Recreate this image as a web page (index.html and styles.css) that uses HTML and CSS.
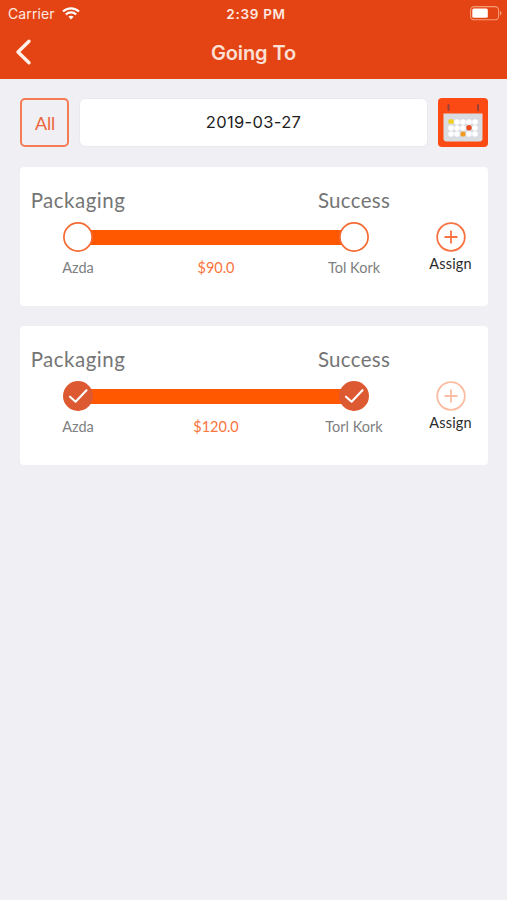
FILE: index.html
```html
<!DOCTYPE html>
<html lang="en">
<head>
<meta charset="utf-8">
<title>Going To</title>
<link rel="stylesheet" href="styles.css">
</head>
<body>
<header class="header">
  <div class="status">
    <div class="carrier"><span class="carrier-name">Carrier</span>
      <svg class="wifi" width="18" height="13" viewBox="0 0 18 13" fill="none" stroke="#fff" stroke-width="2.1"><path d="M1 4.6C5.4.3 12.6.3 17 4.6"/><path d="M3.8 7.5c2.9-2.8 7.5-2.8 10.4 0"/><path d="M6.4 9.7c1.5-1.3 3.7-1.3 5.2 0L9 12.4z" fill="#fff" stroke="none"/></svg>
    </div>
    <span class="time">2:39 PM</span>
    <svg class="battery" width="32" height="15" viewBox="0 0 32 15"><rect x=".6" y=".6" width="28" height="13.2" rx="3.6" fill="none" stroke="#f59b78" stroke-width="1.1"/><rect x="2.3" y="2.6" width="15.5" height="9.2" rx="1.5" fill="#fff"/><path d="M30 5c2 .7 2 3.7 0 4.4z" fill="#f59b78"/></svg>
  </div>
  <nav class="nav">
    <svg class="back" width="18" height="28" viewBox="0 0 18 28" fill="none" stroke="#fff0e9" stroke-width="3.4" stroke-linecap="round" stroke-linejoin="round"><path d="M14 3.2 3 14l11 10.8"/></svg>
    <h1 class="title">Going To</h1>
  </nav>
</header>
<main class="content">
  <div class="filters">
    <button class="all">All</button>
    <div class="date">2019-03-27</div>
    <svg class="calendar" width="50" height="49" viewBox="0 0 50 49"><rect width="50" height="49" rx="4" fill="#fc4a14"/><path d="M5.5 15.5h39v25q0 3-3 3h-33q-3 0-3-3z" fill="#d9dce1"/><g stroke="#994039" stroke-width="2" stroke-linecap="round"><path d="M10.5 7v5M40 7v5"/></g><g fill="#fff"><circle cx="19" cy="24" r="2.8"/><circle cx="25" cy="24" r="2.8"/><circle cx="31" cy="24" r="2.8"/><circle cx="37" cy="24" r="2.8"/><circle cx="13" cy="30" r="2.8"/><circle cx="19" cy="30" r="2.8"/><circle cx="25" cy="30" r="2.8"/><circle cx="37" cy="30" r="2.8"/><circle cx="13" cy="36" r="2.8"/><circle cx="19" cy="36" r="2.8"/><circle cx="31" cy="36" r="2.8"/><circle cx="37" cy="36" r="2.8"/></g><rect x="10.3" y="21.2" width="5.5" height="4.6" rx="1.5" fill="#f2cf24"/><circle cx="31" cy="29.7" r="2.7" fill="#ed4b21"/><circle cx="25" cy="36" r="2.6" fill="#f29a22"/></svg>
  </div>

  <section class="card">
    <div class="route">
      <div class="stages"><span class="packaging">Packaging</span><span class="success">Success</span></div>
      <div class="track">
        <svg class="dot" viewBox="0 0 30 30"><circle cx="15" cy="15" r="14.1" fill="#fff" stroke="#f56a32" stroke-width="1.7"/></svg>
        <div class="bar"></div>
        <svg class="dot" viewBox="0 0 30 30"><circle cx="15" cy="15" r="14.1" fill="#fff" stroke="#f56a32" stroke-width="1.7"/></svg>
      </div>
      <div class="places"><span class="from">Azda</span><span class="price">$90.0</span><span class="to">Tol Kork</span></div>
    </div>
    <div class="assign">
      <svg class="plus" viewBox="0 0 30 30" fill="none" stroke="#f77442" stroke-width="1.8"><circle cx="15" cy="15" r="13.8"/><path d="M8.5 15h13M15 8.5v13"/></svg>
      <span class="assign-label">Assign</span>
    </div>
  </section>

  <section class="card">
    <div class="route">
      <div class="stages"><span class="packaging">Packaging</span><span class="success">Success</span></div>
      <div class="track">
        <svg class="dot" viewBox="0 0 30 30"><circle cx="15" cy="15" r="15" fill="#dc5932"/><path d="m7 15.7 5.6 5L23.5 9.2" fill="none" stroke="#fff" stroke-width="2.1" stroke-linecap="round" stroke-linejoin="round"/></svg>
        <div class="bar"></div>
        <svg class="dot" viewBox="0 0 30 30"><circle cx="15" cy="15" r="15" fill="#dc5932"/><path d="m7 15.7 5.6 5L23.5 9.2" fill="none" stroke="#fff" stroke-width="2.1" stroke-linecap="round" stroke-linejoin="round"/></svg>
      </div>
      <div class="places"><span class="from">Azda</span><span class="price">$120.0</span><span class="to">Torl Kork</span></div>
    </div>
    <div class="assign">
      <svg class="plus" viewBox="0 0 30 30" fill="none" stroke="#fbbda2" stroke-width="1.8"><circle cx="15" cy="15" r="13.8"/><path d="M8.5 15h13M15 8.5v13"/></svg>
      <span class="assign-label">Assign</span>
    </div>
  </section>
</main>
</body>
</html>
```
FILE: styles.css
```css
* { box-sizing: border-box; }
body {
  margin: 0;
  min-height: 900px;
  background: #efeff4;
  font-family: Lato, "Liberation Sans", sans-serif;
}
.header {
  height: 79px;
  background: #e44413;
  font-family: Inter, "Liberation Sans", sans-serif;
}
.status {
  display: grid;
  grid-template-columns: 1fr auto 1fr;
  align-items: center;
  height: 27px;
  padding: 0 5px 0 8px;
  color: #ffe9e0;
}
.carrier { display: flex; align-items: center; gap: 7px; }
.carrier-name { font-size: 14px; letter-spacing: 0.1px; }
.time { margin-left: 2px; font-size: 13.5px; font-weight: 600; letter-spacing: 0.7px; }
.battery { justify-self: end; }
.nav {
  display: grid;
  grid-template-columns: 60px 1fr 60px;
  align-items: center;
  height: 50px;
}
.back { margin-left: 15px; }
.title {
  margin: 1px 0 0;
  color: #fce0d6;
  font-size: 20px;
  font-weight: 600;
  line-height: 24px;
  letter-spacing: -0.1px;
  text-align: center;
}
.content {
  display: flex;
  flex-direction: column;
  gap: 20px;
  padding: 19px 19px 0 20px;
}
.filters { display: flex; gap: 10px; height: 49px; }
.all {
  width: 49px;
  height: 49px;
  padding: 0 0 0 1px;
  border: 2px solid #f47b54;
  border-radius: 5px;
  background: none;
  color: #ee663b;
  font: 18px Lato, sans-serif;
  letter-spacing: -0.2px;
}
.date {
  flex: 1;
  border: 1px solid #e9e9ee;
  border-radius: 6px;
  background: #fff;
  color: #1e1e1e;
  font: 16.5px/47px Inter, sans-serif;
  letter-spacing: 0.35px;
  text-align: center;
}
.calendar { flex: none; }
.card {
  display: flex;
  height: 139px;
  padding: 19px 0 0 10px;
  border-radius: 4px;
  background: #fff;
}
.route { flex: none; width: 372px; }
.stages, .places {
  display: grid;
  grid-template-columns: 96px 1fr 96px;
  text-align: center;
  white-space: nowrap;
}
.stages { color: #757575; font-size: 20.5px; line-height: 28px; }
.packaging { letter-spacing: 0.5px; }
.success { grid-column: 3; letter-spacing: 0.3px; }
.track { display: flex; align-items: center; margin: 8px 33px 0; }
.dot { flex: none; z-index: 1; width: 30px; height: 30px; }
.bar { flex: 1; height: 15px; margin: 0 -5px; background: #ff5800; }
.places { margin-top: 6px; color: #808080; font-size: 14.5px; line-height: 20px; }
.price { color: #fa743c; }
.assign {
  display: flex;
  flex: none;
  flex-direction: column;
  align-items: center;
  width: 97px;
  padding-top: 36px;
}
.plus { width: 30px; height: 30px; }
.assign-label { margin-top: 2px; color: #2c2c2c; font-size: 14.5px; line-height: 20px; letter-spacing: 0.2px; }
```
